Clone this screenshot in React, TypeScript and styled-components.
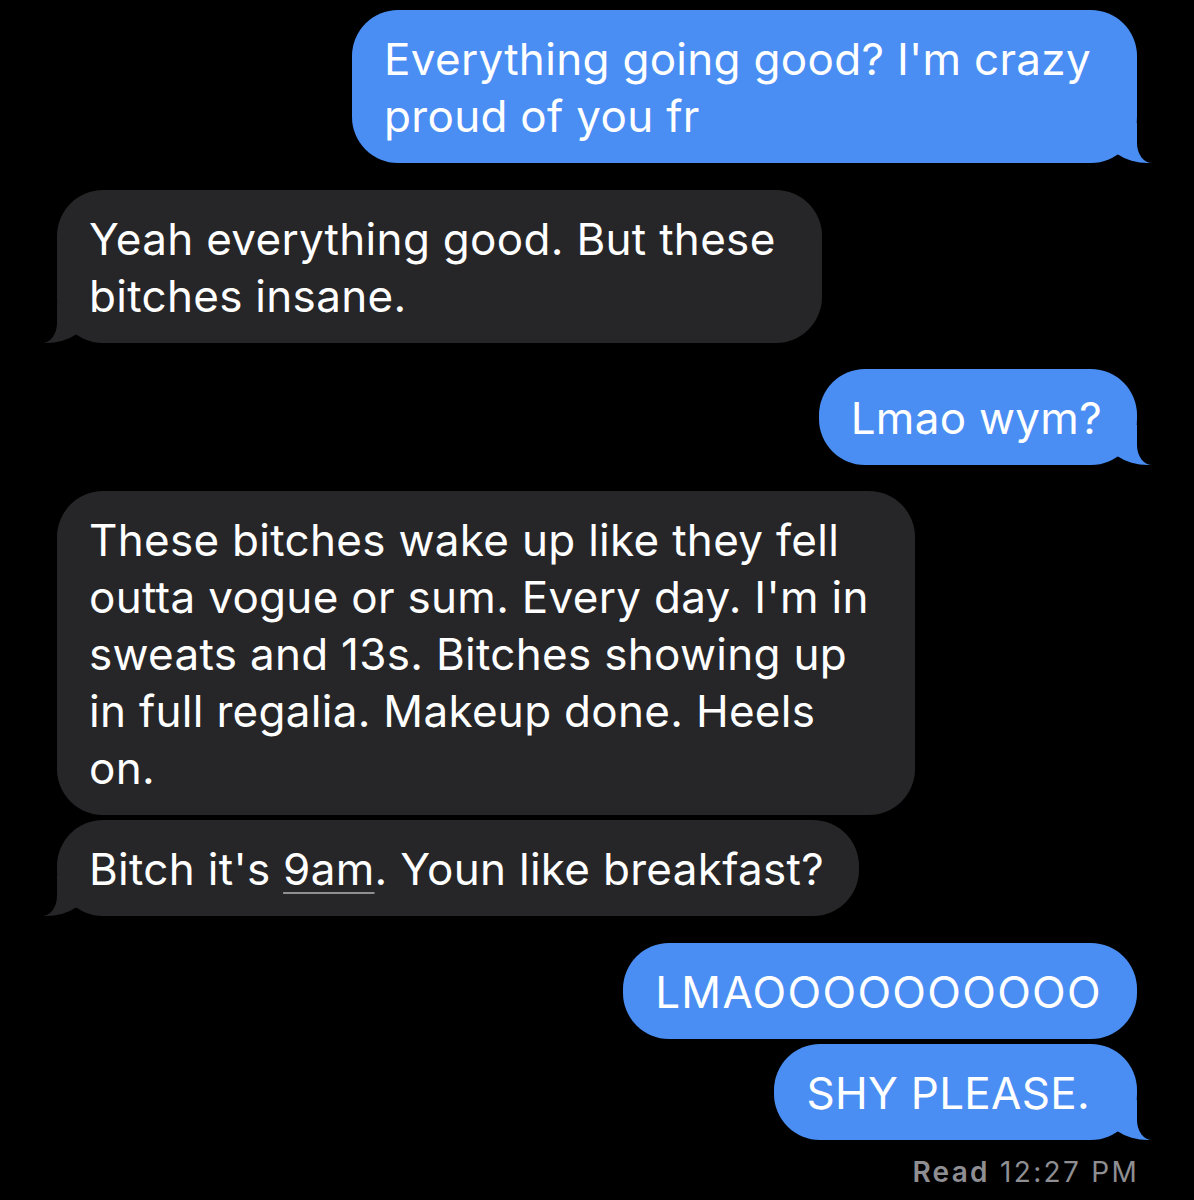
import React from "react";
import styled, { createGlobalStyle, css } from "styled-components";

const GlobalStyle = createGlobalStyle`
  html, body {
    margin: 0;
    padding: 0;
    background: #000;
  }
`;

const BLUE = "#4a8ef4";
const GRAY = "#262628";

const Thread = styled.div`
  min-height: 1200px;
  box-sizing: border-box;
  padding: 10px 57px 0 57px;
  display: flex;
  flex-direction: column;
  background: #000;
  font-family: Inter, "Liberation Sans", sans-serif;
`;

const Row = styled.div<{ $mine: boolean; $gap: number }>`
  display: flex;
  justify-content: ${(p) => (p.$mine ? "flex-end" : "flex-start")};
  margin-top: ${(p) => p.$gap}px;
`;

const Bubble = styled.div<{
  $mine: boolean;
  $tail: boolean;
  $padRight: number;
  $wide?: boolean;
}>`
  position: relative;
  padding: 21px ${(p) => p.$padRight}px 18px 32px;
  border-radius: 46px;
  background: ${(p) => (p.$mine ? BLUE : GRAY)};
  color: #fff;
  font-size: 44px;
  line-height: 57px;
  letter-spacing: ${(p) => (p.$wide ? "1.3px" : "0.3px")};

  ${(p) =>
    p.$tail &&
    p.$mine &&
    css`
      &::before {
        content: "";
        position: absolute;
        bottom: 0;
        right: -15px;
        width: 47px;
        height: 40px;
        background: ${BLUE};
        border-bottom-left-radius: 43px 30px;
      }
      &::after {
        content: "";
        position: absolute;
        bottom: 0;
        right: -22px;
        width: 22px;
        height: 42px;
        background: #000;
        border-bottom-left-radius: 15px 20px;
      }
    `}

  ${(p) =>
    p.$tail &&
    !p.$mine &&
    css`
      &::before {
        content: "";
        position: absolute;
        bottom: 0;
        left: -15px;
        width: 47px;
        height: 40px;
        background: ${GRAY};
        border-bottom-right-radius: 43px 30px;
      }
      &::after {
        content: "";
        position: absolute;
        bottom: 0;
        left: -22px;
        width: 22px;
        height: 42px;
        background: #000;
        border-bottom-right-radius: 15px 20px;
      }
    `}
`;

const Line = styled.span`
  position: relative;
  z-index: 1;
  display: block;
  white-space: nowrap;
`;

const Link = styled.span`
  text-decoration: underline;
  text-decoration-color: #8e8e93;
  text-decoration-thickness: 2px;
  text-underline-offset: 7px;
`;

const Receipt = styled.div`
  margin-top: 15px;
  margin-right: -2px;
  align-self: flex-end;
  font-size: 28px;
  line-height: 34px;
  color: #8e8e93;
  letter-spacing: 2.3px;
`;

const ReadLabel = styled.span`
  font-weight: 600;
`;

type Msg = {
  mine: boolean;
  tail: boolean;
  gap: number;
  padRight?: number;
  wide?: boolean;
  lines: React.ReactNode[];
};

const messages: Msg[] = [
  {
    mine: true,
    tail: true,
    gap: 0,
    padRight: 46,
    lines: ["Everything going good? I'm crazy", "proud of you fr"],
  },
  {
    mine: false,
    tail: true,
    gap: 27,
    padRight: 46,
    lines: ["Yeah everything good. But these", "bitches insane."],
  },
  { mine: true, tail: true, gap: 26, lines: ["Lmao wym?"] },
  {
    mine: false,
    tail: false,
    gap: 26,
    padRight: 46,
    lines: [
      "These bitches wake up like they fell",
      "outta vogue or sum. Every day. I'm in",
      "sweats and 13s. Bitches showing up",
      "in full regalia. Makeup done. Heels",
      "on.",
    ],
  },
  {
    mine: false,
    tail: true,
    gap: 5,
    lines: [
      <>
        Bitch it's <Link>9am</Link>. Youn like breakfast?
      </>,
    ],
  },
  { mine: true, tail: false, gap: 27, wide: true, lines: ["LMAOOOOOOOOOO"] },
  { mine: true, tail: true, gap: 5, padRight: 47, lines: ["SHY PLEASE."] },
];

const App = (): React.ReactElement => {
  return (
    <>
      <GlobalStyle />
      <Thread>
        {messages.map((m, i) => (
          <Row key={i} $mine={m.mine} $gap={m.gap}>
            <Bubble
              $mine={m.mine}
              $tail={m.tail}
              $padRight={m.padRight ?? 35}
              $wide={m.wide}
            >
              {m.lines.map((l, j) => (
                <Line key={j}>{l}</Line>
              ))}
            </Bubble>
          </Row>
        ))}
        <Receipt>
          <ReadLabel>Read</ReadLabel> 12:27 PM
        </Receipt>
      </Thread>
    </>
  );
};

export default App;
